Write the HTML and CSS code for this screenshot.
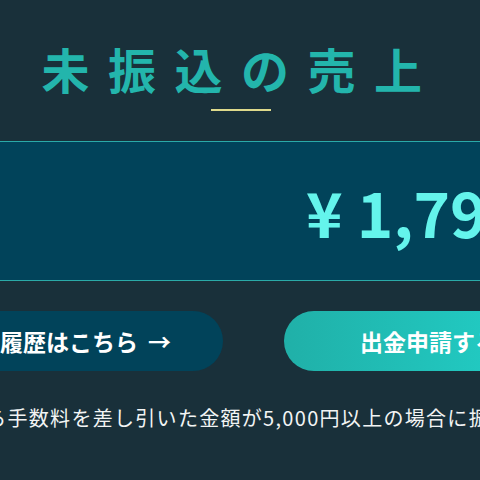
FILE: index.html
```html
<html>

<head>
    <meta charset="utf-8">
    <link rel="stylesheet" href="styles.css">
</head>
    <body>
        <div class="page">
            <h1 class="title">未振込の売上</h1>
            <div class="title-line"></div>

            <div class="amount-box">
                <p class="amount">¥ 1,795,000</p>
            </div>

            <div class="actions">
                <button class="btn btn-history">出金履歴はこちら<span class="arrow">→</span></button>
                <button class="btn btn-withdraw">出金申請する</button>
            </div>

            <p class="note">売上から手数料を差し引いた金額が5,000円以上の場合に振込申請ができます。</p>
        </div>
    </body>

</html>
```

FILE: styles.css
```css
html , body {
    width: 100%;
    height: 100%;
    overflow: hidden;
}
body{
    margin: 0;
    padding: 0;
    background-color: rgb(25, 48, 58);
    color: #fff;
    font-family: "Noto Sans CJK JP", "Noto Sans", sans-serif;
}
.page{
    width: 960px;
    margin-left: -239px;
    text-align: center;
}
.title{
    margin: 0;
    padding-top: 44px;
    font-size: 48px;
    line-height: 48px;
    font-weight: 700;
    letter-spacing: 18.5px;
    color: rgb(35, 181, 172);
}
.title-line{
    width: 60px;
    height: 2px;
    margin: 17px auto 0;
    background-color: rgb(222, 218, 140);
}
.amount-box{
    display: flex;
    align-items: center;
    height: 138px;
    margin-top: 30px;
    padding-left: 545px;
    background-color: rgb(1, 67, 90);
    border-top: 1px solid rgb(42, 170, 168);
    border-bottom: 1px solid rgb(42, 170, 168);
}
.amount{
    margin: 0;
    font-size: 62px;
    font-weight: 700;
    color: rgb(100, 244, 236);
    white-space: nowrap;
}
.actions{
    display: flex;
    justify-content: center;
    gap: 61px;
    margin-top: 30px;
}
.btn{
    height: 60px;
    border: none;
    border-radius: 30px;
    font-family: inherit;
    font-size: 23px;
    font-weight: 700;
    color: #fff;
    cursor: pointer;
}
.btn-history{
    width: 315px;
    padding-right: 12px;
    background-color: rgb(1, 67, 90);
}
.arrow{
    margin-left: 10px;
}
.btn-withdraw{
    width: 290px;
    background: linear-gradient(90deg, rgb(32, 176, 168), rgb(34, 212, 204));
}
.note{
    margin: 32px 0 0;
    padding-left: 120px;
    font-size: 20px;
    letter-spacing: 1.3px;
    color: #f2f4f4;
    white-space: nowrap;
}
```
